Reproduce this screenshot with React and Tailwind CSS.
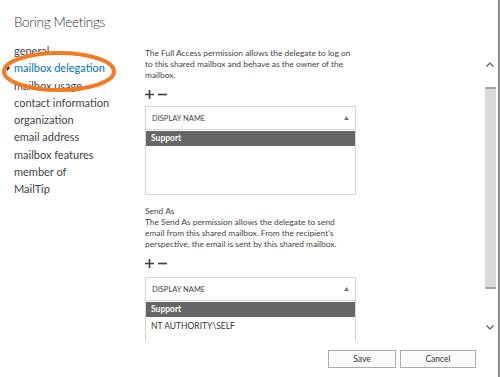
import React from 'react';

const font = { fontFamily: 'Lato, "Open Sans", sans-serif' };

const navItems = [
  'general',
  'mailbox delegation',
  'mailbox usage',
  'contact information',
  'organization',
  'email address',
  'mailbox features',
  'member of',
  'MailTip',
];

function PlusMinus() {
  return (
    <div className="flex items-center gap-[4px] h-[16px]">
      <svg width="9" height="9" viewBox="0 0 9 9">
        <path d="M4.5 0v9M0 4.5h9" stroke="#444" strokeWidth="1.7" />
      </svg>
      <svg width="9" height="9" viewBox="0 0 9 9">
        <path d="M0 4.5h9" stroke="#444" strokeWidth="1.7" />
      </svg>
    </div>
  );
}

function DelegateList({ rows, height }) {
  return (
    <div className="w-[211px]">
      {/* header */}
      <div className="h-[24px] border border-[#d4d4d4] flex items-center justify-between px-[6px]">
        <span className="text-[7.5px] text-[#444]">DISPLAY NAME</span>
        <svg width="5" height="4" viewBox="0 0 5 4">
          <path d="M0 4L2.5 0L5 4z" fill="#777" />
        </svg>
      </div>
      {/* rows */}
      <div className={`border-x border-b border-[#d4d4d4] pt-[1px] ${height}`}>
        {rows.map((r, i) => (
          <div
            key={r}
            className={
              i === 0
                ? 'h-[15px] bg-[#666666] text-white font-bold text-[8.5px] px-[5px] flex items-center'
                : 'h-[19px] text-[#333] text-[8.5px] px-[5px] flex items-center'
            }
          >
            {r}
          </div>
        ))}
      </div>
    </div>
  );
}

export default function App() {
  return (
    <div style={font} className="relative w-[500px] h-[377px] bg-white overflow-hidden border-r-2 border-[#8c8c8c]">
      {/* title */}
      <div className="h-[49px] pl-[14px] pt-[12px]">
        <h1 className="text-[13.5px] tracking-[-0.3px] font-light text-[#333]">Boring Meetings</h1>
      </div>

      <div className="flex h-[293px]">
        {/* left nav */}
        <ul className="w-[145px] -mt-[7px] pl-[14px]">
          {navItems.map((item, i) => (
            <li
              key={item}
              className={`relative h-[17.3px] leading-[17.3px] text-[11px] ${
                i === 1 ? 'text-[#0072c6]' : 'text-[#444]'
              }`}
            >
              {i === 1 && (
                <span className="absolute -left-[7px] top-[6px] w-0 h-0 border-y-[3px] border-y-transparent border-l-[3px] border-l-[#222]" />
              )}
              {item}
            </li>
          ))}
        </ul>

        {/* scrolled content */}
        <div className="flex-1 overflow-hidden">
          <div className="w-[212px] -mt-[1px] text-[8.4px] leading-[11px] text-[#444] whitespace-nowrap">
            <p>
              The Full Access permission allows the delegate to log on
              <br />
              to this shared mailbox and behave as the owner of the
              <br />
              mailbox.
            </p>
            <div className="mt-[5px] mb-[4px]">
              <PlusMinus />
            </div>
            <DelegateList rows={['Support']} height="h-[65px]" />

            <div className="mt-[11px]">
              <p>Send As</p>
              <p>
                The Send As permission allows the delegate to send
                <br />
                email from this shared mailbox. From the recipient's
                <br />
                perspective, the email is sent by this shared mailbox.
              </p>
            </div>
            <div className="mt-[5px] mb-[6px]">
              <PlusMinus />
            </div>
            <DelegateList rows={['Support', 'NT AUTHORITY\\SELF']} height="h-[60px]" />
          </div>
        </div>

        {/* scrollbar */}
        <div className="w-[12px] mr-[2px] flex flex-col items-center pt-[13px]">
          <svg width="8" height="5" viewBox="0 0 8 5">
            <path d="M0.5 4.5L4 1L7.5 4.5" stroke="#555" strokeWidth="1.2" fill="none" />
          </svg>
          <div className="mt-[20px] w-[11px] h-[202px] bg-[#dadada] border-y-2 border-[#a6a6a6]" />
          <svg className="mt-[36px]" width="8" height="5" viewBox="0 0 8 5">
            <path d="M0.5 0.5L4 4L7.5 0.5" stroke="#555" strokeWidth="1.2" fill="none" />
          </svg>
        </div>
      </div>

      {/* footer */}
      <div className="flex justify-end gap-[4px] pr-[22px] pt-[8px]">
        <button className="w-[68px] h-[18px] border border-[#ababab] bg-[#fafafa] text-[8.5px] text-[#333]">
          Save
        </button>
        <button className="w-[76px] h-[18px] border border-[#ababab] bg-[#fafafa] text-[8.5px] text-[#333]">
          Cancel
        </button>
      </div>

      {/* highlight drawn over nav */}
      <svg className="absolute left-0 top-0 pointer-events-none" width="130" height="100">
        <ellipse cx="59" cy="71.5" rx="55" ry="18.5" fill="none" stroke="#f47a22" strokeWidth="4" />
      </svg>
    </div>
  );
}
